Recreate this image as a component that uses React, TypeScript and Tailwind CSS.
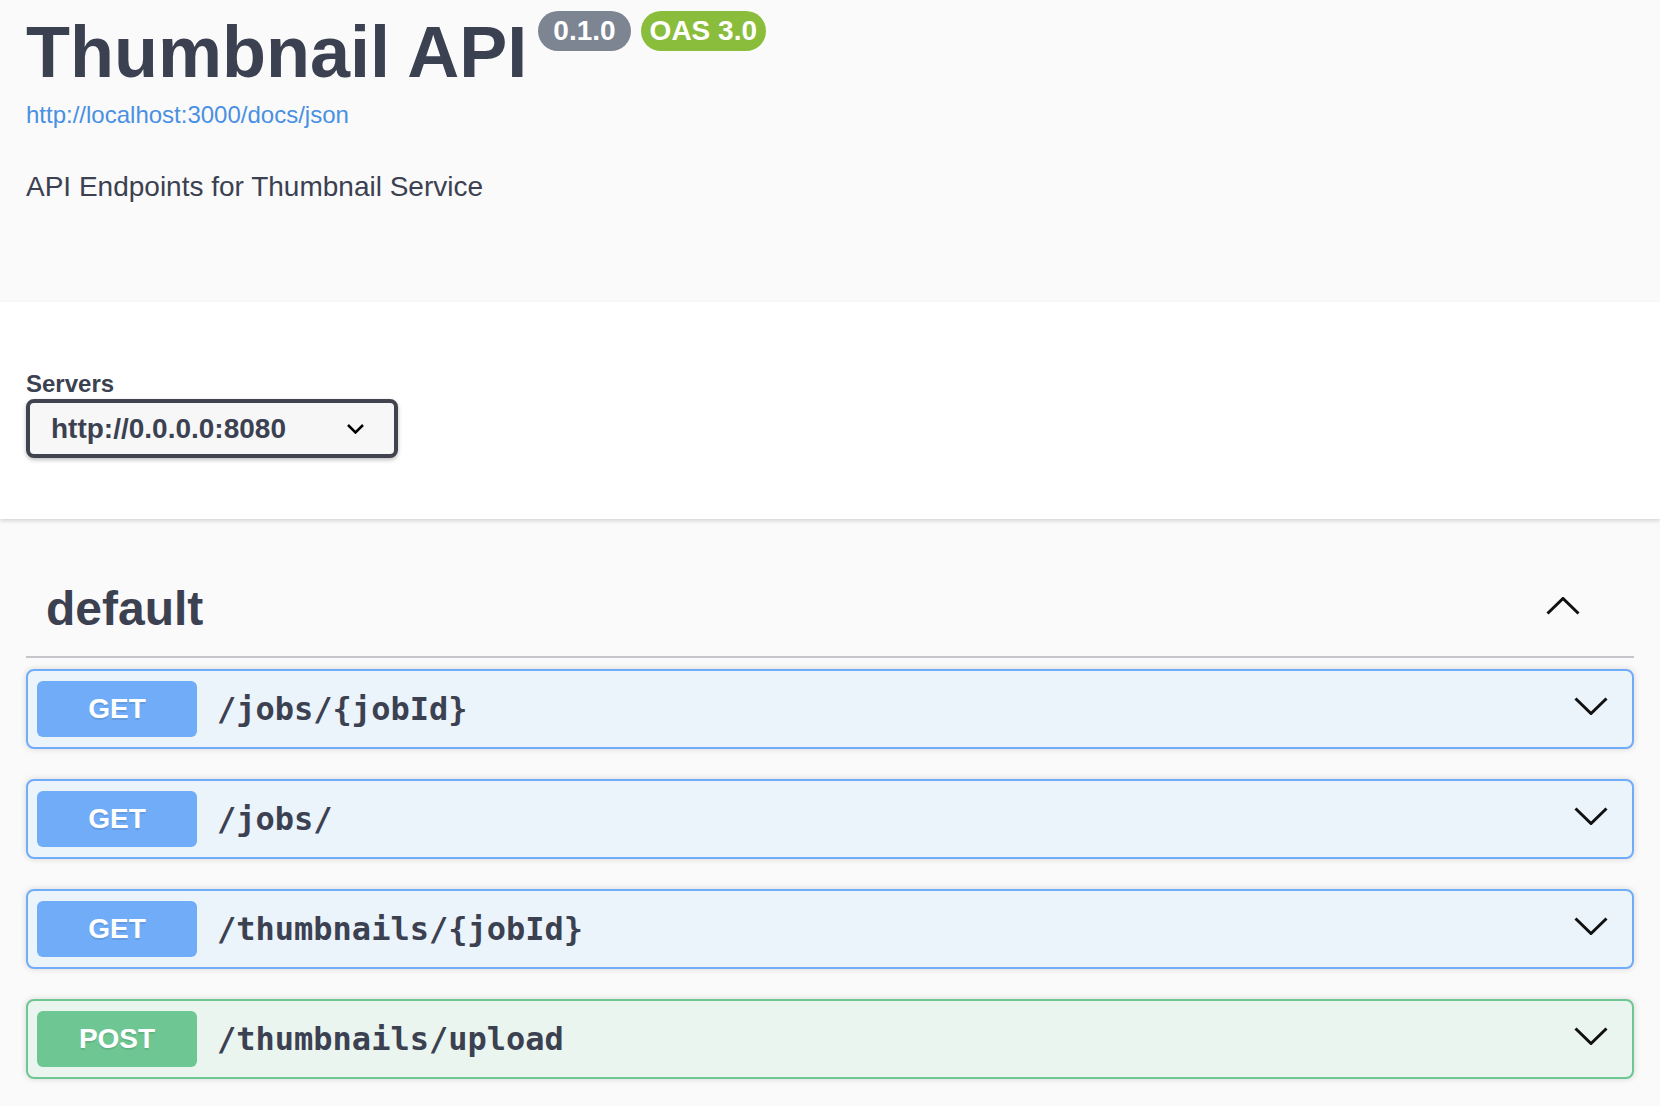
import React from 'react';

const operations = [
  { method: 'GET', path: '/jobs/{jobId}' },
  { method: 'GET', path: '/jobs/' },
  { method: 'GET', path: '/thumbnails/{jobId}' },
  { method: 'POST', path: '/thumbnails/upload' },
];

const Chevron: React.FC<{ up?: boolean; className?: string }> = ({ up, className }) => (
  <svg viewBox="0 0 34 18" width="34" height="18" className={className} fill="none">
    <polyline
      points={up ? '1.5,16.5 17,1.5 32.5,16.5' : '1.5,1.5 17,16.5 32.5,1.5'}
      stroke="#111"
      strokeWidth="3"
      strokeLinecap="butt"
      strokeLinejoin="miter"
    />
  </svg>
);

const OpBlock: React.FC<{ method: string; path: string }> = ({ method, path }) => {
  const isPost = method === 'POST';
  return (
    <div
      className={`flex items-center h-[80px] border-2 rounded-[8px] px-[9px] shadow-[0_0_6px_rgba(0,0,0,0.15)] ${
        isPost ? 'border-[#6ec692] bg-[#ebf5ef]' : 'border-[#70acf7] bg-[#ebf3fb]'
      }`}
    >
      <div
        className={`w-[160px] h-[56px] rounded-[6px] flex items-center justify-center text-white text-[28px] font-bold [text-shadow:0_2px_0_rgba(0,0,0,0.1)] ${
          isPost ? 'bg-[#6ec692]' : 'bg-[#70acf7]'
        }`}
      >
        {method}
      </div>
      <span className="ml-[20px] font-['DejaVu_Sans_Mono',monospace] text-[32px] font-bold text-[#3b4151]">
        {path}
      </span>
      <Chevron className="ml-auto mr-[15px] mb-[6px]" />
    </div>
  );
};

export default function App() {
  return (
    <div className="min-h-screen bg-[#fafafa] font-['Liberation_Sans',Arial,sans-serif] text-[#3b4151]">
      {/* info */}
      <div className="h-[302px] px-[26px] pt-[11px]">
        <div className="flex items-start">
          <h2 className="text-[72px] leading-[82px] font-bold">Thumbnail API</h2>
          <div className="flex gap-[10px] ml-[11px]">
            <span className="h-[40px] px-[15px] rounded-full bg-[#7d8492] text-white text-[28px] font-bold leading-[40px]">
              0.1.0
            </span>
            <span className="h-[40px] px-[9px] rounded-full bg-[#8bbd3c] text-white text-[28px] font-bold leading-[40px]">
              OAS 3.0
            </span>
          </div>
        </div>
        <a className="block mt-[8px] text-[24px] leading-[28px] text-[#4990e2]">http://localhost:3000/docs/json</a>
        <p className="mt-[37px] text-[28px] leading-[42px]">API Endpoints for Thumbnail Service</p>
      </div>

      {/* servers */}
      <div className="relative z-10 h-[217px] bg-white px-[26px] pt-[68px] shadow-[0_2px_4px_0_rgba(0,0,0,0.15)]">
        <div className="text-[24px] leading-[28px] font-bold">Servers</div>
        <div className="mt-[1px] w-[372px] h-[59px] flex items-center border-4 border-[#41444e] rounded-[8px] bg-[#f7f7f7] pl-[21px] pr-[30px] shadow-[0_2px_4px_0_rgba(0,0,0,0.25)]">
          <span className="text-[28px] font-bold">http://0.0.0.0:8080</span>
          <svg viewBox="0 0 17 10" width="17" height="10" className="ml-auto" fill="none">
            <polyline points="1,1 8.5,8.5 16,1" stroke="#000" strokeWidth="2.5" />
          </svg>
        </div>
      </div>

      {/* operations */}
      <div className="px-[26px] pt-[42px] pb-[30px]">
        <div className="flex items-center border-b-2 border-[#c5c6ca] pl-[20px] pr-[54px] py-[20px]">
          <h3 className="text-[48px] leading-[55px] font-bold">default</h3>
          <Chevron up className="ml-auto mb-[6px]" />
        </div>
        <div className="mt-[11px] flex flex-col gap-[30px]">
          {operations.map((op) => (
            <OpBlock key={op.path} method={op.method} path={op.path} />
          ))}
        </div>
      </div>
    </div>
  );
}
